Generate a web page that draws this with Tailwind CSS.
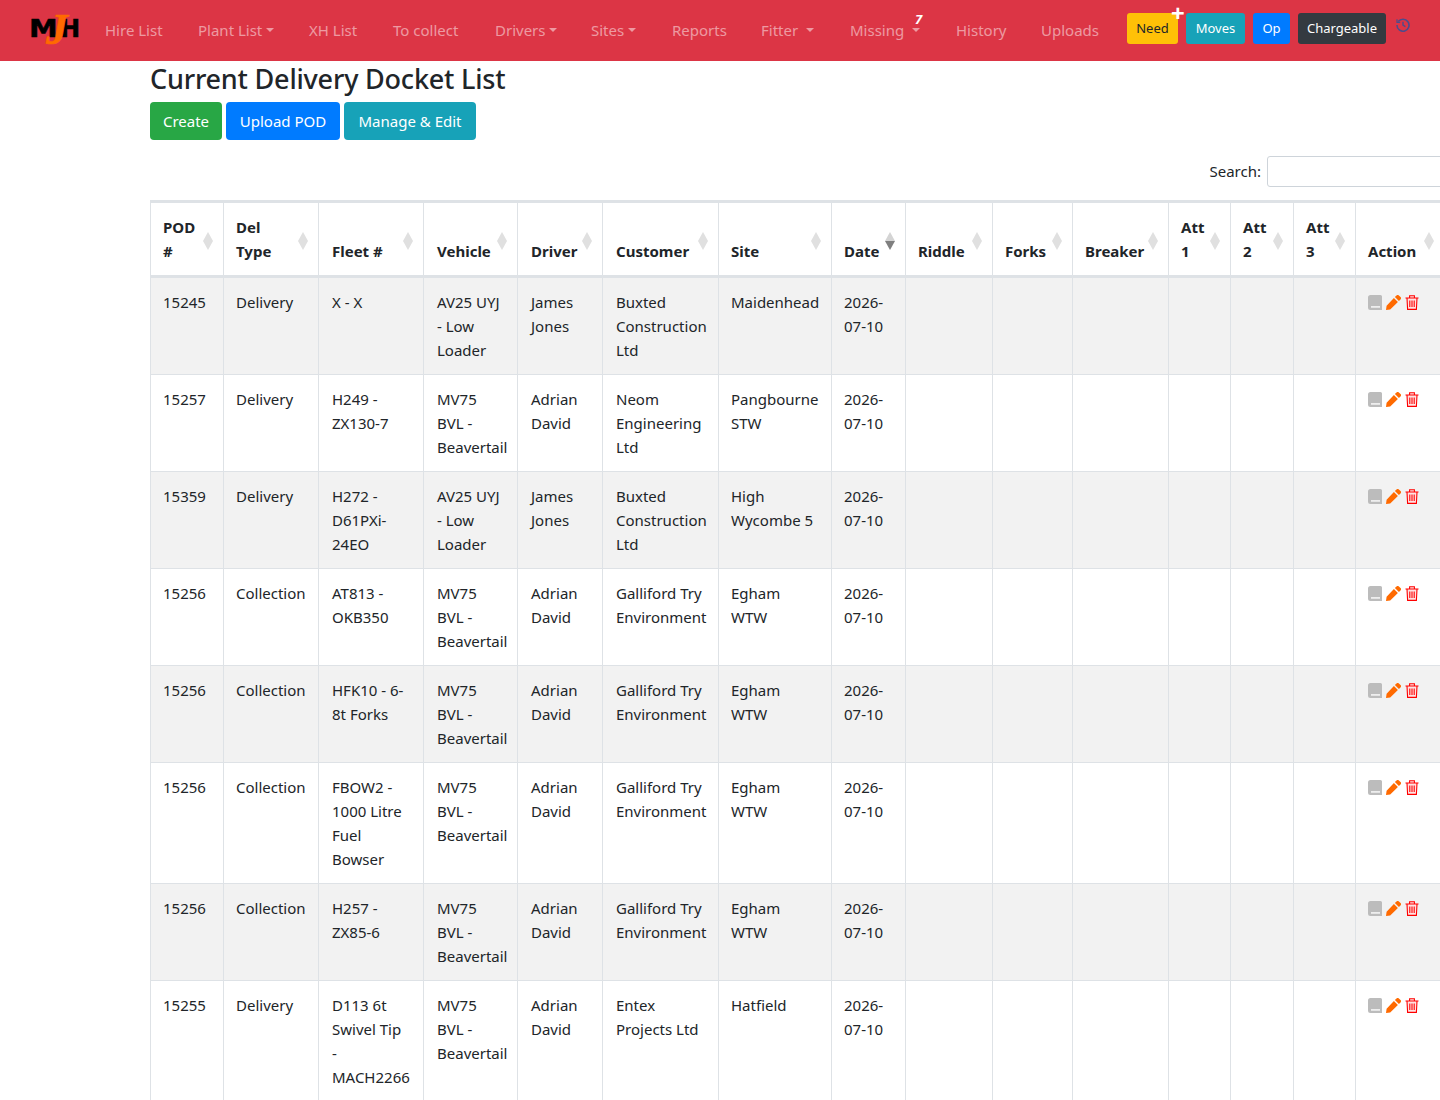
<!DOCTYPE html>
<html lang="en">
<head>
<meta charset="utf-8">
<title>Current Delivery Docket List</title>
<script src="https://cdn.jsdelivr.net/npm/@tailwindcss/browser@4"></script>
</head>
<body class="font-['Noto_Sans','Open_Sans',sans-serif] text-[#212529] text-base bg-white">
<div class="h-[1100px] w-[1440px] overflow-hidden">
  <nav class="h-[61px] pb-[2px] bg-[#dc3545] relative flex items-center text-white/50 text-[15px] leading-6">
    <div class="relative w-[105px] h-full shrink-0">
      <span class="absolute left-[29px] top-[13px] origin-left scale-x-[1.15] font-['DejaVu_Sans'] font-bold text-[25px] leading-8 text-black [-webkit-text-stroke:0.5px_#000]">M</span>
      <span class="absolute left-[60px] top-[13px] font-['DejaVu_Sans'] font-bold text-[24px] leading-8 text-black [-webkit-text-stroke:0.5px_#000]">H</span>
      <span class="absolute left-[46px] top-[10px] font-['Liberation_Serif'] font-bold italic text-[44px] leading-10 text-[#ff6a00] [-webkit-text-stroke:0.6px_#ff6a00]">J</span>
    </div>
    <a class="w-[93px] shrink-0">Hire List</a>
    <a class="w-[111px] shrink-0 flex items-center">Plant List<i class="ml-1 border-x-4 border-x-transparent border-t-4 border-t-white/50"></i></a>
    <a class="w-[84px] shrink-0">XH List</a>
    <a class="w-[102px] shrink-0">To collect</a>
    <a class="w-[96px] shrink-0 flex items-center">Drivers<i class="ml-1 border-x-4 border-x-transparent border-t-4 border-t-white/50"></i></a>
    <a class="w-[81px] shrink-0 flex items-center">Sites<i class="ml-1 border-x-4 border-x-transparent border-t-4 border-t-white/50"></i></a>
    <a class="w-[89px] shrink-0">Reports</a>
    <a class="w-[89px] shrink-0 flex items-center">Fitter<i class="ml-2 border-x-4 border-x-transparent border-t-4 border-t-white/50"></i></a>
    <a class="w-[106px] shrink-0 flex items-center relative">Missing<i class="ml-2 border-x-4 border-x-transparent border-t-4 border-t-white/50"></i><b class="absolute left-[65px] top-[-9px] text-white text-[13px] italic leading-5">7</b></a>
    <a class="w-[85px] shrink-0">History</a>
    <a class="w-[86px] shrink-0">Uploads</a>
    <div class="flex items-center text-[13px] leading-[21px] -mt-[2px]">
      <a class="relative w-[51px] h-[31px] flex items-center justify-center rounded-[3px] bg-[#ffc107] text-[#212529]">Need<b class="absolute left-[44px] top-[-12px] text-white text-[24px] leading-6">+</b></a>
      <a class="ml-2 w-[59px] h-[31px] flex items-center justify-center rounded-[3px] bg-[#17a2b8] text-white">Moves</a>
      <a class="ml-2 w-[37px] h-[31px] flex items-center justify-center rounded-[3px] bg-[#007bff] text-white">Op</a>
      <a class="ml-2 w-[88px] h-[31px] flex items-center justify-center rounded-[3px] bg-[#343a40] text-white">Chargeable</a>
      <svg class="ml-[10px] -mt-[8px]" width="14" height="14" viewBox="0 0 14 14" fill="none" stroke="#4d4c8c" stroke-width="1.6"><path d="M2.2 3.6A6 6 0 1 1 1 7"/><path d="M1 1.2v3.2h3.2" stroke-width="1.2"/><path d="M7 3.8v3.4l2.4 1.4" stroke-width="1.4"/></svg>
    </div>
  </nav>

  <div class="ml-[150px] w-[1294px]">
    <h3 class="text-[27px] tracking-[-0.2px] leading-[33px] font-medium mb-2 mt-[1px]">Current Delivery Docket List</h3>
    <div class="flex gap-1 -mt-[1px]">
      <a class="h-[38px] w-[72px] flex items-center justify-center rounded bg-[#28a745] text-white text-[15px]">Create</a>
      <a class="h-[38px] w-[114px] flex items-center justify-center rounded bg-[#007bff] text-white text-[15px]">Upload POD</a>
      <a class="h-[38px] w-[132px] flex items-center justify-center rounded bg-[#17a2b8] text-white text-[15px]">Manage &amp; Edit</a>
    </div>
    <div class="mt-4 mb-[13px] flex justify-end items-center gap-[6px] text-[15px]">
      <label>Search:</label>
      <input type="search" class="w-[177px] h-[31px] border border-[#ced4da] rounded-[3px] bg-white">
    </div>

    <table class="table-fixed border-collapse w-[1294px] text-[15px] leading-6 [&_th]:relative [&_th]:p-3 [&_th]:text-left [&_th]:align-bottom [&_th]:font-bold [&_th]:border [&_th]:border-[#dee2e6] [&_th]:border-t-[3px] [&_th]:border-b-[3px] [&_td]:p-3 [&_td]:align-top [&_td]:border [&_td]:border-[#dee2e6] [&_td:nth-child(n+3):nth-child(-n+6)]:pl-[13px] [&_th:nth-child(n+3):nth-child(-n+6)]:pl-[13px]">
      <colgroup>
        <col class="w-[73px]"><col class="w-[95px]"><col class="w-[105px]"><col class="w-[94px]"><col class="w-[85px]"><col class="w-[116px]"><col class="w-[113px]"><col class="w-[74px]"><col class="w-[87px]"><col class="w-[80px]"><col class="w-[96px]"><col class="w-[62px]"><col class="w-[63px]"><col class="w-[62px]"><col class="w-[89px]">
      </colgroup>
      <thead>
        <tr>
          <th>POD<br>#<svg class="absolute right-[10px] top-[29px]" width="10" height="18" viewBox="0 0 10 18" fill="#e0e0e0"><path d="M5 0l5 9-5 9-5-9z"/></svg></th>
          <th>Del<br>Type<svg class="absolute right-[10px] top-[29px]" width="10" height="18" viewBox="0 0 10 18" fill="#e0e0e0"><path d="M5 0l5 9-5 9-5-9z"/></svg></th>
          <th>Fleet #<svg class="absolute right-[10px] top-[29px]" width="10" height="18" viewBox="0 0 10 18" fill="#e0e0e0"><path d="M5 0l5 9-5 9-5-9z"/></svg></th>
          <th>Vehicle<svg class="absolute right-[10px] top-[29px]" width="10" height="18" viewBox="0 0 10 18" fill="#e0e0e0"><path d="M5 0l5 9-5 9-5-9z"/></svg></th>
          <th>Driver<svg class="absolute right-[10px] top-[29px]" width="10" height="18" viewBox="0 0 10 18" fill="#e0e0e0"><path d="M5 0l5 9-5 9-5-9z"/></svg></th>
          <th>Customer<svg class="absolute right-[10px] top-[29px]" width="10" height="18" viewBox="0 0 10 18" fill="#e0e0e0"><path d="M5 0l5 9-5 9-5-9z"/></svg></th>
          <th>Site<svg class="absolute right-[10px] top-[29px]" width="10" height="18" viewBox="0 0 10 18" fill="#e0e0e0"><path d="M5 0l5 9-5 9-5-9z"/></svg></th>
          <th>Date<svg class="absolute right-[10px] top-[29px]" width="10" height="18" viewBox="0 0 10 18"><path d="M5 0l5 9H0z" fill="#d4d4d4"/><path d="M0 9h10l-5 9z" fill="#7f7f7f"/></svg></th>
          <th>Riddle<svg class="absolute right-[10px] top-[29px]" width="10" height="18" viewBox="0 0 10 18" fill="#e0e0e0"><path d="M5 0l5 9-5 9-5-9z"/></svg></th>
          <th>Forks<svg class="absolute right-[10px] top-[29px]" width="10" height="18" viewBox="0 0 10 18" fill="#e0e0e0"><path d="M5 0l5 9-5 9-5-9z"/></svg></th>
          <th>Breaker<svg class="absolute right-[10px] top-[29px]" width="10" height="18" viewBox="0 0 10 18" fill="#e0e0e0"><path d="M5 0l5 9-5 9-5-9z"/></svg></th>
          <th>Att<br>1<svg class="absolute right-[10px] top-[29px]" width="10" height="18" viewBox="0 0 10 18" fill="#e0e0e0"><path d="M5 0l5 9-5 9-5-9z"/></svg></th>
          <th>Att<br>2<svg class="absolute right-[10px] top-[29px]" width="10" height="18" viewBox="0 0 10 18" fill="#e0e0e0"><path d="M5 0l5 9-5 9-5-9z"/></svg></th>
          <th>Att<br>3<svg class="absolute right-[10px] top-[29px]" width="10" height="18" viewBox="0 0 10 18" fill="#e0e0e0"><path d="M5 0l5 9-5 9-5-9z"/></svg></th>
          <th>Action<svg class="absolute right-[10px] top-[29px]" width="10" height="18" viewBox="0 0 10 18" fill="#e0e0e0"><path d="M5 0l5 9-5 9-5-9z"/></svg></th>
        </tr>
      </thead>
      <tbody>
        <tr class="bg-[#f2f2f2]"><td>15245</td><td>Delivery</td><td>X - X</td><td>AV25 UYJ - Low Loader</td><td>James Jones</td><td>Buxted Construction Ltd</td><td>Maidenhead</td><td>2026-07-10</td><td></td><td></td><td></td><td></td><td></td><td></td><td><div class="flex gap-1 mt-[5px]"><svg width="14" height="15" viewBox="0 0 14 15"><path d="M2.5 0H12.5A1.5 1.5 0 0 1 14 1.5V15H2.5A2.5 2.5 0 0 1 0 12.5v-10A2.5 2.5 0 0 1 2.5 0z" fill="#bcbcbc"/><path d="M3 11h9v1.8H3z" fill="#eee"/></svg><svg width="15" height="15" viewBox="0 0 15 15" fill="#ff6a00"><path d="M10.5 .5a1.7 1.7 0 0 1 2.4 0l1.6 1.6a1.7 1.7 0 0 1 0 2.4l-1.6 1.6-4-4zM7.9 2.9l4 4-7.7 7.5-4.2.6.6-4.3z"/></svg><svg width="14" height="15" viewBox="0 0 14 15" fill="#ffe3e3" stroke="#f00" stroke-width="1.1"><path d="M.5 3h13M4.6 2.8V.8h4.8v2M2 3l.6 11.4h8.8L12 3zM4.8 5.5v6.5M7 5.5v6.5M9.2 5.5v6.5"/></svg></div></td></tr>
        <tr><td>15257</td><td>Delivery</td><td>H249 - ZX130-7</td><td>MV75 BVL - Beavertail</td><td>Adrian David</td><td>Neom Engineering Ltd</td><td>Pangbourne STW</td><td>2026-07-10</td><td></td><td></td><td></td><td></td><td></td><td></td><td><div class="flex gap-1 mt-[5px]"><svg width="14" height="15" viewBox="0 0 14 15"><path d="M2.5 0H12.5A1.5 1.5 0 0 1 14 1.5V15H2.5A2.5 2.5 0 0 1 0 12.5v-10A2.5 2.5 0 0 1 2.5 0z" fill="#bcbcbc"/><path d="M3 11h9v1.8H3z" fill="#eee"/></svg><svg width="15" height="15" viewBox="0 0 15 15" fill="#ff6a00"><path d="M10.5 .5a1.7 1.7 0 0 1 2.4 0l1.6 1.6a1.7 1.7 0 0 1 0 2.4l-1.6 1.6-4-4zM7.9 2.9l4 4-7.7 7.5-4.2.6.6-4.3z"/></svg><svg width="14" height="15" viewBox="0 0 14 15" fill="#ffe3e3" stroke="#f00" stroke-width="1.1"><path d="M.5 3h13M4.6 2.8V.8h4.8v2M2 3l.6 11.4h8.8L12 3zM4.8 5.5v6.5M7 5.5v6.5M9.2 5.5v6.5"/></svg></div></td></tr>
        <tr class="bg-[#f2f2f2]"><td>15359</td><td>Delivery</td><td>H272 - D61PXi-24EO</td><td>AV25 UYJ - Low Loader</td><td>James Jones</td><td>Buxted Construction Ltd</td><td>High Wycombe 5</td><td>2026-07-10</td><td></td><td></td><td></td><td></td><td></td><td></td><td><div class="flex gap-1 mt-[5px]"><svg width="14" height="15" viewBox="0 0 14 15"><path d="M2.5 0H12.5A1.5 1.5 0 0 1 14 1.5V15H2.5A2.5 2.5 0 0 1 0 12.5v-10A2.5 2.5 0 0 1 2.5 0z" fill="#bcbcbc"/><path d="M3 11h9v1.8H3z" fill="#eee"/></svg><svg width="15" height="15" viewBox="0 0 15 15" fill="#ff6a00"><path d="M10.5 .5a1.7 1.7 0 0 1 2.4 0l1.6 1.6a1.7 1.7 0 0 1 0 2.4l-1.6 1.6-4-4zM7.9 2.9l4 4-7.7 7.5-4.2.6.6-4.3z"/></svg><svg width="14" height="15" viewBox="0 0 14 15" fill="#ffe3e3" stroke="#f00" stroke-width="1.1"><path d="M.5 3h13M4.6 2.8V.8h4.8v2M2 3l.6 11.4h8.8L12 3zM4.8 5.5v6.5M7 5.5v6.5M9.2 5.5v6.5"/></svg></div></td></tr>
        <tr><td>15256</td><td>Collection</td><td>AT813 - OKB350</td><td>MV75 BVL - Beavertail</td><td>Adrian David</td><td>Galliford Try Environment</td><td>Egham WTW</td><td>2026-07-10</td><td></td><td></td><td></td><td></td><td></td><td></td><td><div class="flex gap-1 mt-[5px]"><svg width="14" height="15" viewBox="0 0 14 15"><path d="M2.5 0H12.5A1.5 1.5 0 0 1 14 1.5V15H2.5A2.5 2.5 0 0 1 0 12.5v-10A2.5 2.5 0 0 1 2.5 0z" fill="#bcbcbc"/><path d="M3 11h9v1.8H3z" fill="#eee"/></svg><svg width="15" height="15" viewBox="0 0 15 15" fill="#ff6a00"><path d="M10.5 .5a1.7 1.7 0 0 1 2.4 0l1.6 1.6a1.7 1.7 0 0 1 0 2.4l-1.6 1.6-4-4zM7.9 2.9l4 4-7.7 7.5-4.2.6.6-4.3z"/></svg><svg width="14" height="15" viewBox="0 0 14 15" fill="#ffe3e3" stroke="#f00" stroke-width="1.1"><path d="M.5 3h13M4.6 2.8V.8h4.8v2M2 3l.6 11.4h8.8L12 3zM4.8 5.5v6.5M7 5.5v6.5M9.2 5.5v6.5"/></svg></div></td></tr>
        <tr class="bg-[#f2f2f2]"><td>15256</td><td>Collection</td><td>HFK10 - 6-8t Forks</td><td>MV75 BVL - Beavertail</td><td>Adrian David</td><td>Galliford Try Environment</td><td>Egham WTW</td><td>2026-07-10</td><td></td><td></td><td></td><td></td><td></td><td></td><td><div class="flex gap-1 mt-[5px]"><svg width="14" height="15" viewBox="0 0 14 15"><path d="M2.5 0H12.5A1.5 1.5 0 0 1 14 1.5V15H2.5A2.5 2.5 0 0 1 0 12.5v-10A2.5 2.5 0 0 1 2.5 0z" fill="#bcbcbc"/><path d="M3 11h9v1.8H3z" fill="#eee"/></svg><svg width="15" height="15" viewBox="0 0 15 15" fill="#ff6a00"><path d="M10.5 .5a1.7 1.7 0 0 1 2.4 0l1.6 1.6a1.7 1.7 0 0 1 0 2.4l-1.6 1.6-4-4zM7.9 2.9l4 4-7.7 7.5-4.2.6.6-4.3z"/></svg><svg width="14" height="15" viewBox="0 0 14 15" fill="#ffe3e3" stroke="#f00" stroke-width="1.1"><path d="M.5 3h13M4.6 2.8V.8h4.8v2M2 3l.6 11.4h8.8L12 3zM4.8 5.5v6.5M7 5.5v6.5M9.2 5.5v6.5"/></svg></div></td></tr>
        <tr><td>15256</td><td>Collection</td><td>FBOW2 - 1000 Litre Fuel Bowser</td><td>MV75 BVL - Beavertail</td><td>Adrian David</td><td>Galliford Try Environment</td><td>Egham WTW</td><td>2026-07-10</td><td></td><td></td><td></td><td></td><td></td><td></td><td><div class="flex gap-1 mt-[5px]"><svg width="14" height="15" viewBox="0 0 14 15"><path d="M2.5 0H12.5A1.5 1.5 0 0 1 14 1.5V15H2.5A2.5 2.5 0 0 1 0 12.5v-10A2.5 2.5 0 0 1 2.5 0z" fill="#bcbcbc"/><path d="M3 11h9v1.8H3z" fill="#eee"/></svg><svg width="15" height="15" viewBox="0 0 15 15" fill="#ff6a00"><path d="M10.5 .5a1.7 1.7 0 0 1 2.4 0l1.6 1.6a1.7 1.7 0 0 1 0 2.4l-1.6 1.6-4-4zM7.9 2.9l4 4-7.7 7.5-4.2.6.6-4.3z"/></svg><svg width="14" height="15" viewBox="0 0 14 15" fill="#ffe3e3" stroke="#f00" stroke-width="1.1"><path d="M.5 3h13M4.6 2.8V.8h4.8v2M2 3l.6 11.4h8.8L12 3zM4.8 5.5v6.5M7 5.5v6.5M9.2 5.5v6.5"/></svg></div></td></tr>
        <tr class="bg-[#f2f2f2]"><td>15256</td><td>Collection</td><td>H257 - ZX85-6</td><td>MV75 BVL - Beavertail</td><td>Adrian David</td><td>Galliford Try Environment</td><td>Egham WTW</td><td>2026-07-10</td><td></td><td></td><td></td><td></td><td></td><td></td><td><div class="flex gap-1 mt-[5px]"><svg width="14" height="15" viewBox="0 0 14 15"><path d="M2.5 0H12.5A1.5 1.5 0 0 1 14 1.5V15H2.5A2.5 2.5 0 0 1 0 12.5v-10A2.5 2.5 0 0 1 2.5 0z" fill="#bcbcbc"/><path d="M3 11h9v1.8H3z" fill="#eee"/></svg><svg width="15" height="15" viewBox="0 0 15 15" fill="#ff6a00"><path d="M10.5 .5a1.7 1.7 0 0 1 2.4 0l1.6 1.6a1.7 1.7 0 0 1 0 2.4l-1.6 1.6-4-4zM7.9 2.9l4 4-7.7 7.5-4.2.6.6-4.3z"/></svg><svg width="14" height="15" viewBox="0 0 14 15" fill="#ffe3e3" stroke="#f00" stroke-width="1.1"><path d="M.5 3h13M4.6 2.8V.8h4.8v2M2 3l.6 11.4h8.8L12 3zM4.8 5.5v6.5M7 5.5v6.5M9.2 5.5v6.5"/></svg></div></td></tr>
        <tr><td>15255</td><td>Delivery</td><td>D113 6t Swivel Tip<br>-<br>MACH2266</td><td>MV75 BVL - Beavertail</td><td>Adrian David</td><td>Entex Projects Ltd</td><td>Hatfield</td><td>2026-07-10</td><td></td><td></td><td></td><td></td><td></td><td></td><td><div class="flex gap-1 mt-[5px]"><svg width="14" height="15" viewBox="0 0 14 15"><path d="M2.5 0H12.5A1.5 1.5 0 0 1 14 1.5V15H2.5A2.5 2.5 0 0 1 0 12.5v-10A2.5 2.5 0 0 1 2.5 0z" fill="#bcbcbc"/><path d="M3 11h9v1.8H3z" fill="#eee"/></svg><svg width="15" height="15" viewBox="0 0 15 15" fill="#ff6a00"><path d="M10.5 .5a1.7 1.7 0 0 1 2.4 0l1.6 1.6a1.7 1.7 0 0 1 0 2.4l-1.6 1.6-4-4zM7.9 2.9l4 4-7.7 7.5-4.2.6.6-4.3z"/></svg><svg width="14" height="15" viewBox="0 0 14 15" fill="#ffe3e3" stroke="#f00" stroke-width="1.1"><path d="M.5 3h13M4.6 2.8V.8h4.8v2M2 3l.6 11.4h8.8L12 3zM4.8 5.5v6.5M7 5.5v6.5M9.2 5.5v6.5"/></svg></div></td></tr>
      </tbody>
    </table>
  </div>
</div>
</body>
</html>
